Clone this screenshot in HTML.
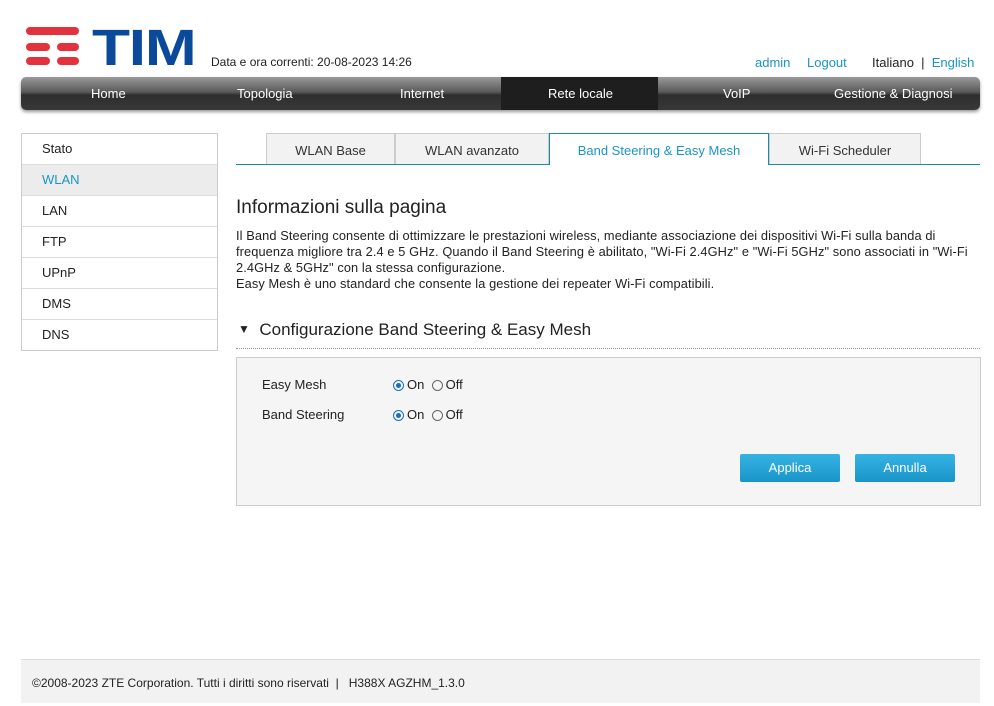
<!DOCTYPE html>
<html><head><meta charset="utf-8"><style>
body{margin:0;width:994px;height:706px;background:#fff;font-family:"Liberation Sans",sans-serif;position:relative;overflow:hidden;color:#333}
.a{position:absolute}
.bar{position:absolute;background:#e2323e;border-radius:4px;height:8px}
.nav{left:21px;top:77px;width:959px;height:33px;border-radius:5px;background:linear-gradient(#9a9a9a,#5a5a5a 45%,#2e2e2e 55%,#383838);box-shadow:0 2px 3px #999}
.nav span{position:absolute;top:9px;color:#fff;font-size:13px}
.side{left:21px;top:133px;width:195px;border:1px solid #ccc}
.side div{height:30px;line-height:30px;padding-left:20px;font-size:13px;border-top:1px solid #ddd;color:#222}
.side div:first-child{border-top:none}
.tab{position:absolute;top:133px;height:31px;line-height:33px;text-align:center;font-size:13px;background:#f2f2f2;border:1px solid #ccc;border-bottom:none;color:#333;box-sizing:border-box}
.radio{display:inline-block;width:11px;height:11px;border:1px solid #666;border-radius:50%;vertical-align:-2px;margin-right:3px;box-sizing:border-box;position:relative}
.radio.on{border-color:#1a6fc0}
.radio.on:after{content:"";position:absolute;left:2px;top:2px;width:5px;height:5px;border-radius:50%;background:#1a6fc0}
.btn{position:absolute;top:454px;width:100px;height:28px;line-height:28px;text-align:center;color:#fff;font-size:13px;background:linear-gradient(#35b4e3,#1a94c8);border-radius:2px}
</style></head><body>
<div class="bar" style="left:26px;top:27px;width:53px"></div>
<div class="bar" style="left:26px;top:43px;width:24px"></div>
<div class="bar" style="left:57px;top:43px;width:22px"></div>
<div class="bar" style="left:26px;top:57px;width:24px"></div>
<div class="bar" style="left:57px;top:57px;width:22px"></div>
<div class="a" style="left:92px;top:22px;font-size:51px;font-weight:bold;color:#0b4a9a;letter-spacing:-1px;line-height:51px;transform:scaleX(1.22);transform-origin:0 0">TIM</div>
<div class="a" style="left:211px;top:55px;font-size:12px;color:#222">Data e ora correnti: 20-08-2023 14:26</div>
<div class="a" style="left:755px;top:55px;font-size:13px;color:#1a94c8">admin</div>
<div class="a" style="left:807px;top:55px;font-size:13px;color:#1a94c8">Logout</div>
<div class="a" style="left:872px;top:55px;font-size:13px;color:#222">Italiano &nbsp;|&nbsp; <span style="color:#1a94c8">English</span></div>
<div class="a nav">
<div class="a" style="left:480px;top:0;width:157px;height:33px;background:#1e1e1e"></div>
<span style="left:70px">Home</span><span style="left:216px">Topologia</span><span style="left:379px">Internet</span><span style="left:527px">Rete locale</span><span style="left:702px">VoIP</span><span style="left:813px">Gestione &amp; Diagnosi</span>
</div>
<div class="a side"><div>Stato</div><div style="background:#ececec;color:#1a94c8">WLAN</div><div>LAN</div><div>FTP</div><div>UPnP</div><div>DMS</div><div>DNS</div></div>
<div class="a" style="left:236px;top:164px;width:744px;height:1px;background:#1a8aa8"></div>
<div class="tab" style="left:266px;width:129px">WLAN Base</div>
<div class="tab" style="left:395px;width:154px">WLAN avanzato</div>
<div class="tab" style="left:549px;width:220px;background:#fff;border-color:#1a8aa8;height:32px;color:#1a94c8">Band Steering &amp; Easy Mesh</div>
<div class="tab" style="left:769px;width:152px">Wi-Fi Scheduler</div>
<div class="a" style="left:236px;top:197px;font-size:19px;color:#222">Informazioni sulla pagina</div>
<div class="a" style="left:236px;top:228px;white-space:nowrap;font-size:12.8px;letter-spacing:0.1px;line-height:16px;color:#222">Il Band Steering consente di ottimizzare le prestazioni wireless, mediante associazione dei dispositivi Wi-Fi sulla banda di<br>frequenza migliore tra 2.4 e 5 GHz. Quando il Band Steering è abilitato, "Wi-Fi 2.4GHz" e "Wi-Fi 5GHz" sono associati in "Wi-Fi<br>2.4GHz &amp; 5GHz" con la stessa configurazione.<br>Easy Mesh è uno standard che consente la gestione dei repeater Wi-Fi compatibili.</div>
<div class="a" style="left:238px;top:320px;font-size:17px;color:#222"><span style="font-size:12px;vertical-align:2px">▼</span>&nbsp; Configurazione Band Steering &amp; Easy Mesh</div>
<div class="a" style="left:236px;top:348px;width:744px;border-top:1px dotted #999"></div>
<div class="a" style="left:236px;top:357px;width:743px;height:147px;background:#f5f5f5;border:1px solid #ccc"></div>
<div class="a" style="left:262px;top:377px;font-size:13px;color:#222">Easy Mesh</div>
<div class="a" style="left:262px;top:407px;font-size:13px;color:#222">Band Steering</div>
<div class="a" style="left:393px;top:377px;font-size:13px;color:#222"><span class="radio on"></span>On &nbsp;<span class="radio"></span>Off</div>
<div class="a" style="left:393px;top:407px;font-size:13px;color:#222"><span class="radio on"></span>On &nbsp;<span class="radio"></span>Off</div>
<div class="btn" style="left:740px">Applica</div>
<div class="btn" style="left:855px">Annulla</div>
<div class="a" style="left:21px;top:659px;width:959px;height:43px;background:#f2f2f2;border-top:1px solid #ddd"></div>
<div class="a" style="left:32px;top:676px;font-size:12px;color:#222">©2008-2023 ZTE Corporation. Tutti i diritti sono riservati &nbsp;| &nbsp; H388X AGZHM_1.3.0</div>
</body></html>
